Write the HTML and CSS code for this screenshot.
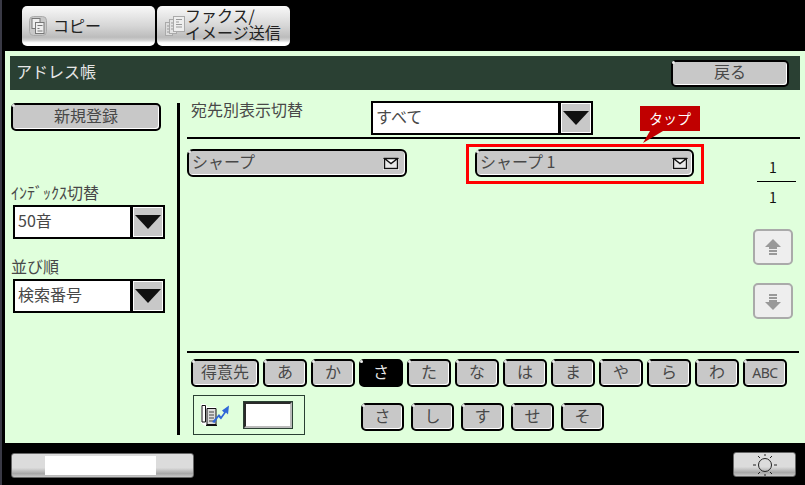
FILE: index.html
```html
<!DOCTYPE html>
<html lang="ja">
<head>
<meta charset="utf-8">
<title>アドレス帳</title>
<link rel="stylesheet" href="styles.css">
</head>
<body>
<div class="screen">
  <header class="tabs">
    <div class="tab tab-copy">
      <svg class="tab-icon" width="18" height="20" viewBox="0 0 18 20"><rect x="0.5" y="0.5" width="17" height="19" rx="4" fill="#c8c8c8" stroke="#aaa"/><rect x="3" y="2.5" width="8" height="10" fill="#eee" stroke="#777"/><rect x="6.5" y="6.5" width="8.5" height="11" fill="#eee" stroke="#777"/><path d="M8.5 9.5h5M8.5 12.5h2M8.5 15h5" stroke="#777"/></svg>
      <span>コピー</span>
    </div>
    <div class="tab tab-fax">
      <svg class="tab-icon" width="20" height="20" viewBox="0 0 20 20"><rect x="0.5" y="6.5" width="7" height="13" fill="#ddd" stroke="#aaa"/><rect x="4.5" y="3.5" width="7" height="14" fill="#e4e4e4" stroke="#aaa"/><rect x="8.5" y="0.5" width="11" height="15" fill="#eee" stroke="#aaa"/><path d="M11 3.5h6M11 6h3M11 8.5h6M11 11h6M2 10h2M2 13h2M2 16h2M6 7h2M6 10h2M6 13h2" stroke="#999"/></svg>
      <span>ファクス/<br>イメージ送信</span>
    </div>
  </header>

  <main class="panel">
    <div class="titlebar">
      <span class="title-text">アドレス帳</span>
      <button class="btn btn-back">戻る</button>
    </div>
    <div class="content">
      <aside class="sidebar">
        <button class="btn btn-new">新規登録</button>
        <div class="field-label label-index">ｲﾝﾃﾞｯｸｽ切替</div>
        <div class="select select-side">
          <span class="select-value">50音</span>
          <span class="select-arrow"><svg width="26" height="14" viewBox="0 0 26 14"><path d="M0 0h26L13 14z"/></svg></span>
        </div>
        <div class="field-label label-order">並び順</div>
        <div class="select select-side">
          <span class="select-value">検索番号</span>
          <span class="select-arrow"><svg width="26" height="14" viewBox="0 0 26 14"><path d="M0 0h26L13 14z"/></svg></span>
        </div>
      </aside>
      <div class="vline"></div>
      <section class="main">
        <div class="toolbar">
          <span class="toolbar-label">宛先別表示切替</span>
          <div class="select select-top">
            <span class="select-value">すべて</span>
            <span class="select-arrow"><svg width="26" height="14" viewBox="0 0 26 14"><path d="M0 0h26L13 14z"/></svg></span>
          </div>
        </div>
        <div class="rule"></div>
        <div class="middle">
          <button class="btn btn-name btn-name-first">
            <span>シャープ</span>
            <svg class="mail" width="16" height="13" viewBox="0 0 16 13"><rect width="16" height="13" fill="#fff"/><rect x="1.5" y="1.5" width="13" height="10" fill="#e8e8e8" stroke="#111" stroke-width="1.4"/><path d="M1.5 1.5l6.5 5 6.5-5z" fill="#fff" stroke="#111" stroke-width="1.4"/></svg>
          </button>
          <div class="highlight">
            <div class="callout">タップ<svg class="callout-tail" width="24" height="13" viewBox="0 0 24 13"><path d="M10 0h13L3 12z"/></svg></div>
            <button class="btn btn-name btn-name-second">
              <span>シャープ 1</span>
              <svg class="mail" width="16" height="13" viewBox="0 0 16 13"><rect width="16" height="13" fill="#fff"/><rect x="1.5" y="1.5" width="13" height="10" fill="#e8e8e8" stroke="#111" stroke-width="1.4"/><path d="M1.5 1.5l6.5 5 6.5-5z" fill="#fff" stroke="#111" stroke-width="1.4"/></svg>
            </button>
          </div>
          <div class="pager">
            <div class="pager-num">1</div>
            <div class="pager-line"></div>
            <div class="pager-num pager-total">1</div>
            <div class="page-btn page-up"><svg width="16" height="17" viewBox="0 0 16 17"><path d="M8 0l8 8h-4v2H4V8H0zM4 11h8v2H4zM4 14h8v2H4z" fill="#999"/></svg></div>
            <div class="page-btn page-down"><svg width="16" height="17" viewBox="0 0 16 17"><path d="M8 17l8-8h-4V7H4v2H0zM4 4h8v2H4zM4 1h8v2H4z" fill="#999"/></svg></div>
          </div>
        </div>
        <div class="rule rule-bottom"></div>
        <div class="kana-row">
          <button class="btn kana kana-wide">得意先</button>
          <button class="btn kana">あ</button>
          <button class="btn kana">か</button>
          <button class="btn kana kana-active">さ</button>
          <button class="btn kana">た</button>
          <button class="btn kana">な</button>
          <button class="btn kana">は</button>
          <button class="btn kana">ま</button>
          <button class="btn kana">や</button>
          <button class="btn kana">ら</button>
          <button class="btn kana">わ</button>
          <button class="btn kana kana-abc">ABC</button>
        </div>
        <div class="lower-row">
          <div class="jump-box">
            <svg class="jump-icon" width="30" height="24" viewBox="0 0 30 24"><path d="M1 1h4l3 3h8v19H5l-4-3z" fill="#fff"/><path d="M7 5.5h9v16H7z" fill="#ddd" stroke="#111"/><path d="M6 21.5h11v1.5H6z" fill="#111"/><path d="M2 2.5l3.500 0v16.500l-3.500 0z" fill="#fff" stroke="#111"/><path d="M9 9h5M9 12h5M9 15h5M9 18h5" stroke="#444"/><path d="M12 19l7-8 2 2.500 3-4-2-2 7-5-1 9-2-2-5 7-2.500-2.500-4 6z" fill="#2f67d8"/></svg>
            <div class="jump-input"></div>
          </div>
          <div class="sub-kana">
            <button class="btn kana kana-sub">さ</button>
            <button class="btn kana kana-sub">し</button>
            <button class="btn kana kana-sub">す</button>
            <button class="btn kana kana-sub">せ</button>
            <button class="btn kana kana-sub">そ</button>
          </div>
        </div>
      </section>
    </div>
  </main>

  <footer class="footer">
    <div class="foot-btn foot-left"><div class="foot-white"></div></div>
    <div class="foot-btn foot-right">
      <svg width="26" height="22" viewBox="0 0 26 22"><circle cx="13" cy="11" r="6.500" fill="none" stroke="#222"/><path d="M13 0v2M13 20v2M1 11h3M22 11h3M6 2l2 2M20 2l-2 2M6 20l2-2M20 20l-2-2" stroke="#222"/></svg>
    </div>
  </footer>
</div>
</body>
</html>
```

FILE: styles.css
```css
* { box-sizing: border-box; }
html, body { margin: 0; padding: 0; }
body {
  width: 805px;
  height: 485px;
  overflow: hidden;
  background: #000;
  font-family: "Noto Sans CJK JP", "Liberation Sans", sans-serif;
  font-size: 16px;
  color: #484848;
}
.screen {
  width: 805px;
  height: 485px;
  background: #000;
  border-left: 2px solid #3a3a46;
  padding-left: 3px;
  display: flex;
  flex-direction: column;
}
button { font: inherit; color: inherit; margin: 0; padding: 0; }

/* Tabs */
.tabs {
  height: 51px;
  flex: none;
  display: flex;
  gap: 2px;
  padding: 6px 0 5px 17px;
}
.tab {
  width: 133px;
  height: 40px;
  border-radius: 5px;
  background: linear-gradient(#fafafa 0, #f0f0f0 12%, #d6d6d6 50%, #bcbcbc 78%, #cfcfcf 85%, #fff 92%, #fff 100%);
  display: flex;
  align-items: center;
  color: #222;
  line-height: 17px;
}
.tab-copy { padding-left: 7px; gap: 6px; }
.tab-copy span { padding-bottom: 1px; }
.tab-fax { padding-left: 8px; gap: 0; }
.tab-fax span { padding-bottom: 4px; white-space: nowrap; }
.tab-icon { flex: none; }

/* Panel */
.panel {
  height: 392px;
  flex: none;
  background: #e0ffdc;
  padding: 5px 5px 0 5px;
  display: flex;
  flex-direction: column;
}
.titlebar {
  height: 34px;
  flex: none;
  background: #2a4033;
  color: #e6e6e6;
  display: flex;
  align-items: center;
  justify-content: space-between;
  padding: 0 11px 0 6px;
  line-height: 1;
}
.title-text { padding-bottom: 4px; }

/* Buttons */
.btn {
  position: relative;
  background: #c8c8c8;
  border: 2px solid #000;
  border-radius: 5px;
  box-shadow: inset -1px -1px 0 #fff;
  display: flex;
  align-items: center;
  justify-content: center;
  line-height: 1;
  padding-bottom: 4px;
  color: #484848;
}
.btn::before {
  content: "";
  position: absolute;
  left: -1px;
  top: -1px;
  width: 3px;
  height: 3px;
  border-radius: 50%;
  background: #eee;
}
.btn-back { width: 118px; height: 27px; }
.btn-new { width: 150px; height: 28px; margin-left: 1px; }

/* Sidebar */
.content { flex: 1; display: flex; min-height: 0; }
.sidebar { width: 167px; flex: none; padding-top: 13px; }
.vline { width: 3px; flex: none; background: #000; margin: 13px 0 8px; }
.field-label {
  height: 20px;
  line-height: 16px;
  margin-bottom: 1px;
  margin-left: 1px;
  white-space: nowrap;
}
.label-index { margin-top: 53px; }
.label-order { margin-top: 19px; }

/* Selects */
.select {
  display: flex;
  height: 34px;
  background: #fff;
  border: 2px solid #000;
}
.select-side { width: 152px; margin-left: 3px; }
.select-top { width: 222px; }
.select-value { flex: 1; padding-left: 3px; line-height: 26px; }
.select-arrow {
  position: relative;
  width: 33px;
  flex: none;
  border-left: 3px solid #000;
  background: #c8c8c8;
  box-shadow: inset 0 0 0 1px #fff;
  display: flex;
  align-items: center;
  justify-content: center;
}
.select-arrow svg { fill: #111; display: block; }

/* Main */
.main { flex: 1; padding-top: 11px; min-width: 0; }
.toolbar { display: flex; height: 36px; padding-left: 11px; }
.toolbar-label { width: 180px; line-height: 16px; }
.rule { height: 2px; background: #000; margin-left: 7px; width: 613px; }
.rule-bottom { width: 612px; }
.middle { display: flex; align-items: flex-start; height: 212px; }
.btn-name {
  width: 219px;
  height: 28px;
  justify-content: space-between;
  padding: 0 4px 4px 3px;
  flex: none;
  border-radius: 6px;
}
.btn-name-first { width: 220px; margin: 10px 0 0 7px; padding-right: 6px; }
.mail { display: block; margin-bottom: -4px; }
.highlight {
  position: relative;
  margin: 5px 0 0 59px;
  width: 238px;
  height: 40px;
  border: 3px solid #f00;
  padding: 2px 0 0 6px;
  flex: none;
}
.callout {
  position: absolute;
  left: 171px;
  top: -41px;
  width: 60px;
  height: 25px;
  background: #c00000;
  color: #fff;
  font-size: 14px;
  line-height: 24px;
  text-align: center;
}
.callout-tail {
  position: absolute;
  left: 0;
  top: 25px;
  fill: #c00000;
}

/* Pager */
.pager { width: 40px; margin-left: 49px; flex: none; color: #111; }
.pager-num { height: 18px; line-height: 18px; font-size: 14px; text-align: center; margin-top: 19px; }
.pager-line { height: 1px; background: #000; margin: 5px -3px 0 4px; }
.pager-total { margin-top: 6px; }
.page-btn {
  width: 40px;
  height: 36px;
  background: #eee;
  border: 2px solid #aaa;
  border-radius: 5px;
  display: flex;
  align-items: center;
  justify-content: center;
}
.page-btn svg { display: block; }
.page-up { margin-top: 23px; }
.page-down { margin-top: 18px; }

/* Kana */
.kana-row { display: flex; gap: 4px; margin: 6px 0 0 11px; }
.kana { width: 44px; height: 28px; flex: none; }
.kana-wide { width: 68px; }
.kana-active { background: #000; color: #e8e8e8; box-shadow: none; }
.kana-abc { font-size: 14px; letter-spacing: -0.5px; font-family: "Noto Sans", sans-serif; padding-bottom: 1px; }
.lower-row { display: flex; margin: 8px 0 0 13px; }
.jump-box {
  width: 112px;
  height: 40px;
  border: 1px solid #2a4033;
  display: flex;
  align-items: center;
  padding-left: 6px;
  gap: 14px;
  flex: none;
}
.jump-icon { display: block; flex: none; }
.jump-input {
  width: 48px;
  height: 26px;
  background: #fff;
  border: 2px solid #2a2a2a;
  border-right-color: #bbb;
  border-bottom-color: #bbb;
  box-shadow: 0 0 0 1px #2a4033;
  flex: none;
}
.sub-kana { display: flex; gap: 7px; margin: 8px 0 0 56px; }
.kana-sub { width: 43px; }

/* Footer */
.footer {
  flex: 1;
  display: flex;
  justify-content: space-between;
  align-items: flex-start;
  padding: 9px 9px 0 6px;
}
.foot-btn {
  border: 1px solid #666;
  border-radius: 3px;
  background: linear-gradient(#dcdcdc 0, #dcdcdc 60%, #a8a8a8 85%, #c8c8c8 100%);
}
.foot-left { width: 183px; height: 25px; margin-top: 1px; padding: 2px 0 0 33px; }
.foot-white { width: 111px; height: 19px; background: #fff; }
.foot-right {
  width: 63px;
  height: 25px;
  display: flex;
  align-items: center;
  justify-content: center;
}
```
